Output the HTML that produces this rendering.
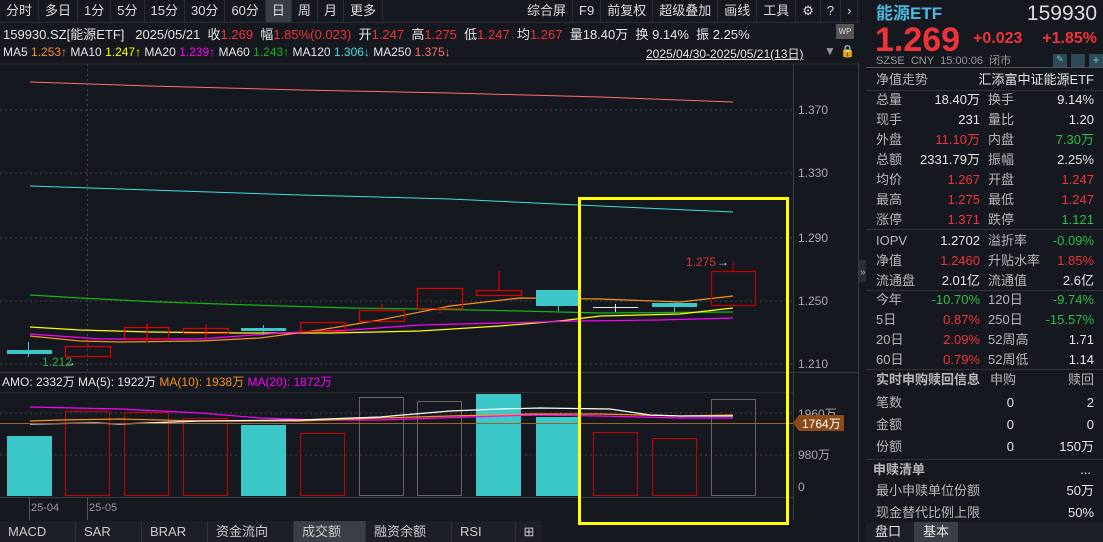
<!DOCTYPE html>
<html><head><meta charset="utf-8"><style>
*{margin:0;padding:0;box-sizing:border-box}
body{width:1103px;height:542px;background:#15181e;overflow:hidden;position:relative;font-family:"Liberation Sans","Noto Sans CJK SC",sans-serif;color:#c8c8c8;font-size:13px}
.a{position:absolute;white-space:nowrap}
.r{color:#f0333a}.g{color:#2fbf4a}.w{color:#e6e6e6}.gr{color:#9a9a9a}
.tb span{display:inline-block;height:22px;line-height:22px;padding:0 6px;border-right:1px solid #2a2d33}
.rp .row{position:absolute;left:876px;width:218px;height:20px;line-height:20px;font-size:13px}
.rp .l1{position:absolute;left:0;color:#b8b8b8}
.rp .v1{position:absolute;right:114px;text-align:right}
.rp .l2{position:absolute;left:112px;color:#b8b8b8}
.rp .v2{position:absolute;right:0;text-align:right}
.hl{position:absolute;left:866px;width:237px;height:1px;background:#30333a}
.bt div{line-height:21px}
</style></head><body>
<div class="a tb" style="left:0;top:0;height:22px;font-size:13px;color:#ddd">
<span>分时</span><span>多日</span><span>1分</span><span>5分</span><span>15分</span><span>30分</span><span>60分</span><span style="background:#3a3e46">日</span><span>周</span><span>月</span><span>更多</span></div>
<div class="a tb" style="left:521px;top:0;height:22px;color:#ddd"><span>综合屏</span><span>F9</span><span>前复权</span><span>超级叠加</span><span>画线</span><span>工具</span><span>⚙</span><span>?</span><span>›</span></div>
<div class="a" style="left:0;top:22px;width:860px;height:1px;background:#2a2d33"></div>
<div class="a w" style="left:3px;top:24px;font-size:13px">159930.SZ[能源ETF]&nbsp;&nbsp;&nbsp;2025/05/21&nbsp;&nbsp;收<span class="r">1.269</span>&nbsp;&nbsp;幅<span class="r">1.85%(0.023)</span>&nbsp;&nbsp;开<span class="r">1.247</span>&nbsp;&nbsp;高<span class="r">1.275</span>&nbsp;&nbsp;低<span class="r">1.247</span>&nbsp;&nbsp;均<span class="r">1.267</span>&nbsp;&nbsp;量18.40万&nbsp;&nbsp;换 9.14%&nbsp;&nbsp;振 2.25%</div>
<div class="a" style="left:836px;top:24px;width:18px;height:15px;background:#555;color:#ddd;font-size:8px;line-height:15px;text-align:center">WP</div>
<div class="a w" style="left:3px;top:45px;font-size:12px">MA5 <span style="color:#f7931e">1.253↑</span> MA10 <span style="color:#ffff00">1.247↑</span> MA20 <span style="color:#ff00ff">1.239↑</span> MA60 <span style="color:#19b319">1.243↑</span> MA120 <span style="color:#40e0e0">1.306↓</span> MA250 <span style="color:#ff7070">1.375↓</span></div>
<div class="a w" style="left:646px;top:45px;font-size:12px;text-decoration:underline">2025/04/30-2025/05/21(13日)</div>
<div class="a gr" style="left:824px;top:44px;font-size:12px">▼</div>
<div class="a" style="left:840px;top:44px;font-size:12px;color:#e0a020">🔒</div>

<svg class="a" style="left:0;top:62px" width="866" height="480" viewBox="0 62 866 480">
<line x1="0" y1="64" x2="858" y2="64" stroke="#2a2d33"/>
<line x1="793.5" y1="64" x2="793.5" y2="520" stroke="#3a3d44"/>
<line x1="858.5" y1="0" x2="858.5" y2="542" stroke="#3a3d44"/>
<g stroke="#444" stroke-dasharray="2,3">
<line x1="0" y1="110" x2="793" y2="110"/><line x1="0" y1="173" x2="793" y2="173"/><line x1="0" y1="238" x2="793" y2="238"/><line x1="0" y1="301" x2="793" y2="301"/><line x1="0" y1="364" x2="793" y2="364"/>
<line x1="0" y1="413" x2="793" y2="413"/><line x1="0" y1="455" x2="793" y2="455"/>
<line x1="87.5" y1="64" x2="87.5" y2="372"/>
</g>
<g fill="#aaa" font-size="12" font-family="Liberation Sans">
<text x="798" y="114">1.370</text><text x="798" y="177">1.330</text><text x="798" y="242">1.290</text><text x="798" y="305">1.250</text><text x="798" y="368">1.210</text>
<text x="798" y="418">1960万</text><text x="798" y="459">980万</text><text x="798" y="491">0</text>
</g>
<line x1="0" y1="372.5" x2="858" y2="372.5" stroke="#3a3d44"/>
<polyline fill="none" stroke="#ff7070" stroke-width="1" points="30,82 150,86 300,90 450,93 600,97 733,102"/>
<polyline fill="none" stroke="#40e0e0" stroke-width="1" points="30,186 150,190 300,195 450,199 600,206 733,212"/>
<polyline fill="none" stroke="#19b319" stroke-width="1.2" points="30,295 80,298 160,302 250,305 350,308 420,309 520,311 600,313 733,312"/>
<polyline fill="none" stroke="#ffff00" stroke-width="1.2" points="30,327 80,330 150,332 240,333 330,333 420,331 500,326 560,321 600,316 680,314 733,308"/>
<polyline fill="none" stroke="#f7931e" stroke-width="1.2" points="30,336 80,341 120,342 200,341 260,338 320,330 380,320 450,306 520,298 600,299 680,302 733,296"/>
<polyline fill="none" stroke="#ff00ff" stroke-width="1.2" points="30,334 100,339 200,339 280,333 350,330 420,325 500,323 580,321 660,320 733,318"/>
<g stroke="#e00000" fill="none" stroke-width="1.2">
<rect x="65.5" y="346.5" width="45" height="10"/><line x1="88" y1="343" x2="88" y2="346"/>
<rect x="124.5" y="327.5" width="44" height="11"/><line x1="147" y1="323" x2="147" y2="342"/>
<rect x="183.5" y="328.5" width="45" height="5"/><line x1="206" y1="324" x2="206" y2="339"/>
<rect x="300.5" y="322.5" width="45" height="9"/>
<rect x="359.5" y="310.5" width="45" height="11"/><line x1="382" y1="304" x2="382" y2="310"/>
<rect x="417.5" y="288.5" width="45" height="20"/><line x1="440" y1="309" x2="440" y2="313"/>
<rect x="476.5" y="290.5" width="45" height="5"/><line x1="499" y1="271" x2="499" y2="290"/>
<rect x="711.5" y="271.5" width="44" height="34" stroke="#c00000"/><line x1="733" y1="262" x2="733" y2="271" stroke="#c00000"/>
</g>
<g fill="#3cc8c8">
<rect x="7" y="350" width="45" height="4"/><rect x="28" y="342" width="1" height="15"/>
<rect x="241" y="328" width="45" height="3"/><rect x="263" y="325" width="1" height="10"/>
<rect x="536" y="290" width="43" height="16"/><rect x="558" y="306" width="1" height="5"/>
<rect x="652" y="303" width="45" height="4"/><rect x="674" y="307" width="1" height="5"/>
</g>
<line x1="593" y1="307.5" x2="638" y2="307.5" stroke="#eee"/><line x1="615.5" y1="304" x2="615.5" y2="312" stroke="#eee"/>
<text x="42" y="366" fill="#2fa84a" font-size="12">1.212</text><text x="64" y="366" fill="#ccc" font-size="12">  →</text>
<text x="686" y="266" fill="#e0303a" font-size="12">1.275</text><text x="717" y="266" fill="#ccc" font-size="12">→</text>
<text x="2" y="386" fill="#e6e6e6" font-size="12">AMO: 2332万 MA(5): 1922万 <tspan fill="#f7931e">MA(10): 1938万</tspan> <tspan fill="#ff00ff">MA(20): 1872万</tspan></text>
<line x1="0" y1="392.5" x2="793" y2="392.5" stroke="#2a2d33"/>
<g fill="#3cc8c8"><rect x="7" y="436" width="45" height="60"/><rect x="241" y="425" width="45" height="71"/><rect x="476" y="394" width="45" height="102"/><rect x="536" y="417" width="43" height="79"/></g>
<g fill="none" stroke="#cc0000" stroke-width="1"><rect x="65.5" y="411.5" width="44" height="84"/><rect x="124.5" y="412.5" width="44" height="83"/><rect x="183.5" y="418.5" width="44" height="77"/><rect x="300.5" y="433.5" width="44" height="62"/><rect x="593.5" y="432.5" width="44" height="63"/><rect x="652.5" y="438.5" width="44" height="57"/></g>
<g fill="none" stroke="#666" stroke-width="1"><rect x="359.5" y="397.5" width="44" height="98"/><rect x="417.5" y="401.5" width="44" height="94"/><rect x="711.5" y="399.5" width="44" height="96"/></g>
<polyline fill="none" stroke="#ff00ff" stroke-width="1.2" points="30,407 120,409 200,413 260,418 320,420 380,420 440,418 500,416 540,415 600,416 680,418 733,418"/>
<polyline fill="none" stroke="#f7931e" stroke-width="1.2" points="30,421 60,420 120,419 200,421 300,421 380,418 450,416 530,414 600,414 680,416 733,415"/>
<polyline fill="none" stroke="#fff" stroke-width="1.2" points="30,424 95,423 120,424 200,421 300,420 380,417 450,411 500,409 540,408 610,409 650,415 680,416 733,416"/>
<line x1="0" y1="423.5" x2="793" y2="423.5" stroke="#a0602a"/>
<path d="M793,423 l6,-8 h45 v16 h-45z" fill="#8b4a18"/>
<text x="802" y="428" fill="#fff" font-size="12">1764万</text>
<line x1="0" y1="497.5" x2="793" y2="497.5" stroke="#3a3d44"/>
<line x1="29.5" y1="497" x2="29.5" y2="520" stroke="#555"/><line x1="87.5" y1="497" x2="87.5" y2="520" stroke="#555"/>
<text x="31" y="511" fill="#999" font-size="11">25-04</text><text x="89" y="511" fill="#999" font-size="11">25-05</text>
<rect x="579.5" y="198.5" width="208" height="325" fill="none" stroke="#ffff00" stroke-width="3"/>
<rect x="859" y="260" width="7" height="22" fill="#2a2d33"/><text x="860" y="275" fill="#aaa" font-size="10">»</text>
</svg>
<div class="a bt" style="left:0;top:521px;height:21px;font-size:13px;color:#ccc;display:flex">
<div style="width:76px;padding-left:8px;border-right:1px solid #333;background:#1c1f25">MACD</div>
<div style="width:66px;padding-left:8px;border-right:1px solid #333;background:#1c1f25">SAR</div>
<div style="width:66px;padding-left:8px;border-right:1px solid #333;background:#1c1f25">BRAR</div>
<div style="width:86px;padding-left:8px;border-right:1px solid #333;background:#1c1f25">资金流向</div>
<div style="width:72px;padding-left:8px;border-right:1px solid #333;background:#3a3e46">成交额</div>
<div style="width:86px;padding-left:8px;border-right:1px solid #333;background:#1c1f25">融资余额</div>
<div style="width:64px;padding-left:8px;border-right:1px solid #333;background:#1c1f25">RSI</div>
<div style="width:26px;text-align:center;background:#1c1f25">⊞</div></div>

<div class="rp">
<div class="a" style="left:876px;top:4px;font-size:17px;font-weight:bold;color:#4db8e0;line-height:20px">能源ETF</div>
<div class="a" style="right:6px;top:2px;font-size:21px;color:#ddd;line-height:24px">159930</div>
<div class="a r" style="left:875px;top:23px;font-size:34px;font-weight:bold;line-height:34px">1.269</div>
<div class="a r" style="left:973px;top:30px;font-size:16px;font-weight:bold;line-height:18px">+0.023</div>
<div class="a r" style="right:6px;top:30px;font-size:16px;font-weight:bold;line-height:18px">+1.85%</div>
<div class="a gr" style="left:876px;top:55px;font-size:11px;line-height:12px">SZSE&nbsp;&nbsp;CNY&nbsp;&nbsp;15:00:06&nbsp;&nbsp;闭市</div>
<div class="a" style="left:1053px;top:54px;width:14px;height:13px;background:#2e4a58;color:#6cc;font-size:9px;text-align:center">✎</div>
<div class="a" style="left:1071px;top:54px;width:14px;height:13px;background:#2e4a58"></div>
<div class="a" style="left:1089px;top:54px;width:14px;height:13px;background:#2e4a58;color:#6cc;font-size:12px;text-align:center;line-height:13px">+</div>
<div class="hl" style="top:67px;background:#555"></div>
<div class="row" style="top:70px"><span class="l1">净值走势</span><span class="v2 w">汇添富中证能源ETF</span></div>
<div class="hl" style="top:90px"></div>
<div class="row" style="top:90px"><span class="l1">总量</span><span class="v1 w">18.40万</span><span class="l2">换手</span><span class="v2 w">9.14%</span></div>
<div class="row" style="top:110px"><span class="l1">现手</span><span class="v1 w">231</span><span class="l2">量比</span><span class="v2 w">1.20</span></div>
<div class="row" style="top:130px"><span class="l1">外盘</span><span class="v1 r">11.10万</span><span class="l2">内盘</span><span class="v2 g">7.30万</span></div>
<div class="row" style="top:150px"><span class="l1">总额</span><span class="v1 w">2331.79万</span><span class="l2">振幅</span><span class="v2 w">2.25%</span></div>
<div class="row" style="top:170px"><span class="l1">均价</span><span class="v1 r">1.267</span><span class="l2">开盘</span><span class="v2 r">1.247</span></div>
<div class="row" style="top:190px"><span class="l1">最高</span><span class="v1 r">1.275</span><span class="l2">最低</span><span class="v2 r">1.247</span></div>
<div class="row" style="top:210px"><span class="l1">涨停</span><span class="v1 r">1.371</span><span class="l2">跌停</span><span class="v2 g">1.121</span></div>
<div class="hl" style="top:229px"></div>
<div class="row" style="top:231px"><span class="l1">IOPV</span><span class="v1 w">1.2702</span><span class="l2">溢折率</span><span class="v2 g">-0.09%</span></div>
<div class="row" style="top:251px"><span class="l1">净值</span><span class="v1 r">1.2460</span><span class="l2">升贴水率</span><span class="v2 r">1.85%</span></div>
<div class="row" style="top:271px"><span class="l1">流通盘</span><span class="v1 w">2.01亿</span><span class="l2">流通值</span><span class="v2 w">2.6亿</span></div>
<div class="hl" style="top:290px"></div>
<div class="row" style="top:290px"><span class="l1">今年</span><span class="v1 g">-10.70%</span><span class="l2">120日</span><span class="v2 g">-9.74%</span></div>
<div class="row" style="top:310px"><span class="l1">5日</span><span class="v1 r">0.87%</span><span class="l2">250日</span><span class="v2 g">-15.57%</span></div>
<div class="row" style="top:330px"><span class="l1">20日</span><span class="v1 r">2.09%</span><span class="l2">52周高</span><span class="v2 w">1.71</span></div>
<div class="row" style="top:350px"><span class="l1">60日</span><span class="v1 r">0.79%</span><span class="l2">52周低</span><span class="v2 w">1.14</span></div>
<div class="hl" style="top:369px"></div>
<div class="row" style="top:370px"><span class="l1" style="font-weight:bold">实时申购赎回信息</span><span class="l2" style="left:114px">申购</span><span class="v2" style="color:#b8b8b8">赎回</span></div>
<div class="row" style="top:393px"><span class="l1">笔数</span><span class="v1 w" style="right:80px">0</span><span class="v2 w">2</span></div>
<div class="row" style="top:415px"><span class="l1">金额</span><span class="v1 w" style="right:80px">0</span><span class="v2 w">0</span></div>
<div class="row" style="top:437px"><span class="l1">份额</span><span class="v1 w" style="right:80px">0</span><span class="v2 w">150万</span></div>
<div class="hl" style="top:459px"></div>
<div class="row" style="top:460px;left:873px"><span class="l1 w" style="font-weight:bold">申赎清单</span><span class="v2 w">...</span></div>
<div class="row" style="top:481px"><span class="l1">最小申赎单位份额</span><span class="v2 w">50万</span></div>
<div class="row" style="top:503px"><span class="l1">现金替代比例上限</span><span class="v2 w">50%</span></div>
<div class="a" style="left:866px;top:522px;width:237px;height:20px;background:#1c1f25"></div>
<div class="a w" style="left:866px;top:522px;width:44px;height:20px;line-height:20px;text-align:center;font-size:13px">盘口</div>
<div class="a w" style="left:914px;top:522px;width:44px;height:20px;line-height:20px;text-align:center;font-size:13px;background:#3a3e46">基本</div>
</div>
</body></html>
